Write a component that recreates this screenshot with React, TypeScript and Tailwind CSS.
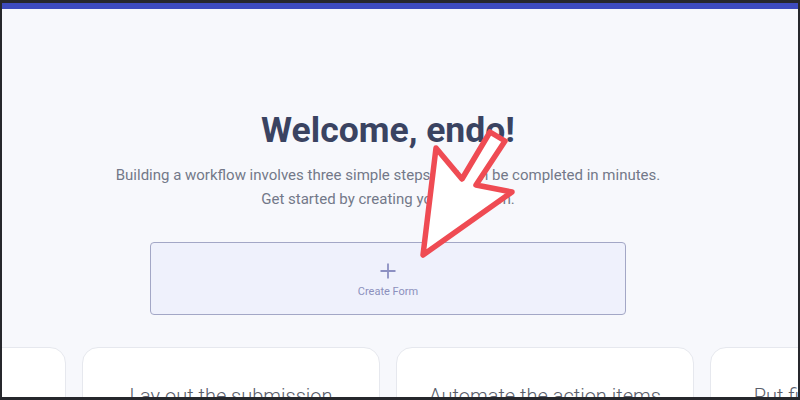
import React from "react";

const steps = [
  "Build your form",
  "Lay out the submission",
  "Automate the action items",
  "Put finishing touches on",
];

function Arrow() {
  // red outline pointer, drawn over the page
  return (
    <svg
      className="pointer-events-none absolute left-0 top-0"
      width={800}
      height={400}
      viewBox="0 0 800 400"
    >
      <path
        d="M423 255 L436 148 L462 179 L490 132 L505 141 L476 185 L512 192 Z"
        fill="#ffffff"
        stroke="#ef4b53"
        strokeWidth={5.5}
        strokeLinejoin="round"
      />
    </svg>
  );
}

export default function App() {
  return (
    <div
      className="relative flex h-[400px] w-[800px] flex-col overflow-hidden bg-[#26272c] pb-[3px] pl-[2px] pr-[2px] pt-[3px]"
      style={{ fontFamily: "Roboto, 'Noto Sans', sans-serif" }}
    >
      <div className="h-[6px] bg-[#3d4bbf]" />
      <main className="flex-1 overflow-hidden bg-[#f7f8fc]">
        <div className="flex flex-col items-center pr-[24px] pt-[101px]">
          <h1 className="text-[35.5px] font-bold leading-[40px] text-[#3a4361]">
            Welcome, endo!
          </h1>
          <p className="mt-[13px] text-center text-[15px] leading-[24px] text-[#737889]">
            Building a workflow involves three simple steps that can be completed in minutes.
            <br />
            Get started by creating your first form.
          </p>
          <button className="mt-[31px] flex h-[73px] w-[476px] flex-col items-center justify-center rounded-[4px] border border-[#a3a7c6] bg-[#eff1fc] pt-[3px] text-[#8c90bd]">
            <svg width="18" height="18" viewBox="0 0 18 18" fill="none">
              <path d="M9 1.5v15M1.5 9h15" stroke="#8c90c2" strokeWidth="1.8" />
            </svg>
            <span className="mt-[5px] text-[11px] leading-[14px]">Create Form</span>
          </button>
        </div>
        <div className="ml-[-234px] mt-[32px] flex gap-[16px]">
          {steps.map((s) => (
            <div
              key={s}
              className="h-[160px] w-[298px] shrink-0 rounded-[16px] border border-[#e6e8ee] bg-white pt-[33px] text-center text-[20px] font-light text-[#5a5e6b]"
            >
              {s}
            </div>
          ))}
        </div>
      </main>
      <Arrow />
    </div>
  );
}
